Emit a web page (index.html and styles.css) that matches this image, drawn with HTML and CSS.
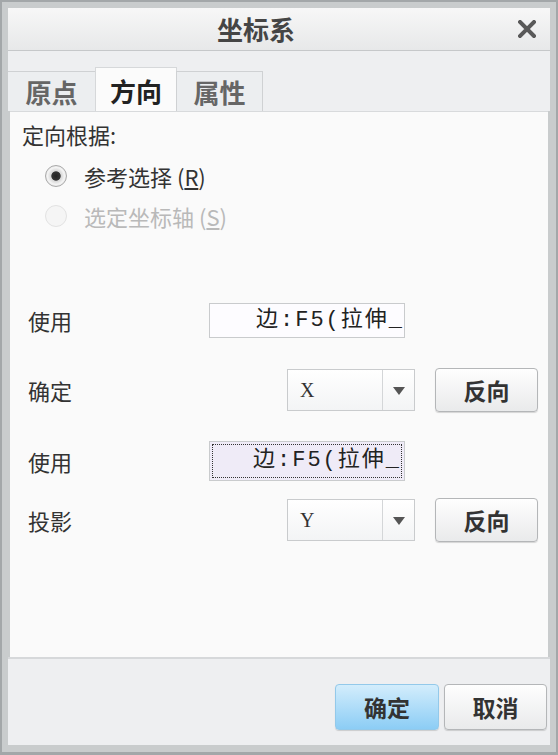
FILE: index.html
```html
<!DOCTYPE html>
<html lang="zh-CN">

<head>
    <meta charset="UTF-8">
    <meta name="viewport" content="width=device-width, initial-scale=1.0">
    <title>坐标系</title>
    <link rel="stylesheet" href="styles.css">
</head>

<body>
    <div class="window">
        <div class="titlebar">
            <h4>坐标系</h4>
            <span class="close">
                <svg width="18" height="18" viewBox="0 0 18 18">
                    <path d="M2 2 L16 16 M16 2 L2 16" stroke="#595959" stroke-width="4" stroke-linecap="square" />
                </svg>
            </span>
        </div>
        <div class="tabs">
            <div class="tab first">原点</div>
            <div class="tab active">方向</div>
            <div class="tab">属性</div>
        </div>
        <div class="panel">
            <p class="caption">定向根据:</p>
            <ul class="radios">
                <li><span class="radio checked"></span>参考选择 (<u>R</u>)</li>
                <li class="disabled"><span class="radio"></span>选定坐标轴 (<u>S</u>)</li>
            </ul>
            <div class="form">
                <div class="row row-use">
                    <label>使用</label>
                    <div class="field">边:F5(拉伸_</div>
                </div>
                <div class="row row-dir">
                    <label>确定</label>
                    <div class="select"><span class="value">X</span><span class="arrow"></span></div>
                    <button class="btn">反向</button>
                </div>
                <div class="row row-use2">
                    <label>使用</label>
                    <div class="field focus"><span>边:F5(拉伸_</span></div>
                </div>
                <div class="row row-proj">
                    <label>投影</label>
                    <div class="select"><span class="value">Y</span><span class="arrow"></span></div>
                    <button class="btn">反向</button>
                </div>
            </div>
        </div>
        <div class="footer">
            <button class="btn primary">确定</button>
            <button class="btn">取消</button>
        </div>
    </div>
</body>

</html>
```

FILE: styles.css
```css
* {
    padding: 0;
    margin: 0;
    box-sizing: border-box;
}

body {
    font-family: "Noto Sans CJK SC", "DejaVu Sans", sans-serif;
    color: #333;
    background-color: #c9cccd;
}

.window {
    width: 558px;
    height: 755px;
    border: 2px solid #a3a7a9;
    border-bottom-width: 3px;
    padding: 6px 6px 7px 6px;
    background-color: #c9cccd;
    display: flex;
    flex-direction: column;
}

.titlebar {
    position: relative;
    height: 43px;
    background: linear-gradient(#f7f7f7, #e7e8e9);
    border-bottom: 1px solid #c6c8ca;
    text-align: center;
    padding-right: 46px;
}

.titlebar h4 {
    line-height: 42px;
    font-size: 26px;
    font-weight: 700;
    color: #454545;
}

.close {
    position: absolute;
    right: 14px;
    top: 12px;
    width: 18px;
    height: 18px;
}

.close svg {
    display: block;
}

.tabs {
    height: 60px;
    background-color: #eeeff1;
    display: flex;
    align-items: flex-end;
}

.tab {
    height: 40px;
    width: 87px;
    border: 1px solid #cfd1d3;
    border-bottom: none;
    background-color: #eceef0;
    font-size: 26px;
    font-weight: 700;
    color: #666;
    line-height: 40px;
    text-align: center;
}

.tab.first {
    width: 88px;
    border-left: none;
}

.tab.active {
    height: 44px;
    width: 82px;
    line-height: 46px;
    background-color: #fbfbfb;
    color: #222;
    border-color: #d6d8da;
}

.tab + .tab {
    margin-left: -1px;
}

.panel {
    flex: 1;
    background-color: #fafafa;
    margin: 0 2px;
    border-top: 1px solid #d8dadc;
    padding: 6px 0 0 12px;
}

.caption {
    font-size: 22px;
    line-height: 32px;
    color: #333;
}

.radios {
    list-style: none;
    padding-left: 23px;
    margin-top: 6px;
}

.radios li {
    display: flex;
    align-items: center;
    height: 40px;
    font-size: 22px;
    color: #333;
}

.radios u {
    text-underline-offset: 2px;
}

.radios li.disabled {
    color: #b9b9b9;
}

.radio {
    width: 22px;
    height: 22px;
    border-radius: 50%;
    border: 1px solid #d8d8d8;
    background: radial-gradient(#ffffff 40%, #ececec);
    margin-right: 17px;
    position: relative;
}

.radio.checked {
    border-color: #a9a9a9;
    background: radial-gradient(#222 0, #333 30%, #d6d6d6 36%, #f4f4f4 60%, #cfcfcf 100%);
}

.disabled .radio {
    border-color: #e2e2e2;
    background: #f5f5f5;
}

.form {
    margin-top: 66px;
    padding-left: 6px;
}

.row {
    display: flex;
    align-items: center;
}

.row label {
    font-size: 22px;
    color: #333;
    width: 181px;
}

.row-dir label,
.row-proj label {
    width: 259px;
}

.row-use {
    height: 36px;
}

.row-dir {
    height: 44px;
    margin-top: 30px;
}

.row-use2 {
    height: 42px;
    margin-top: 28px;
}

.row-proj {
    height: 44px;
    margin-top: 16px;
}

.field {
    width: 196px;
    height: 35px;
    border: 1px solid #c9cbcd;
    background-color: #fdfcff;
    font-family: "Liberation Mono", "Noto Sans CJK SC", monospace;
    font-size: 22px;
    letter-spacing: 2px;
    text-align: right;
    line-height: 33px;
    padding-right: 0;
    color: #222;
    white-space: nowrap;
    overflow: hidden;
}

.field.focus {
    height: 40px;
    padding: 2px;
    background-color: #efebf7;
}

.field.focus span {
    display: block;
    height: 100%;
    border: 1px dotted #333;
    line-height: 32px;
}

.select {
    width: 128px;
    height: 42px;
    border: 1px solid #c9cbcd;
    background: linear-gradient(#ffffff, #f3f4f5);
    display: flex;
}

.select .value {
    flex: 1;
    font-family: "Liberation Serif", serif;
    font-size: 20px;
    line-height: 40px;
    padding-left: 12px;
    color: #333;
    border-right: 1px solid #d4d6d8;
}

.select .arrow {
    width: 31px;
    position: relative;
}

.select .arrow::after {
    content: "";
    position: absolute;
    left: 10px;
    top: 17px;
    border-left: 6px solid transparent;
    border-right: 6px solid transparent;
    border-top: 8px solid #555;
}

.btn {
    width: 103px;
    height: 44px;
    margin-left: 20px;
    border: 1px solid #b4b6b8;
    border-radius: 4px;
    background: linear-gradient(#fefefe, #e9eaeb);
    box-shadow: 0 1px 1px rgba(0, 0, 0, .15);
    font-family: "Noto Sans CJK SC", sans-serif;
    font-size: 23px;
    font-weight: 700;
    color: #333;
}

.footer {
    height: 88px;
    background-color: #eeeff1;
    border-top: 2px solid #d6d8da;
    display: flex;
    justify-content: flex-end;
    align-items: flex-start;
    padding: 25px 3px 0 0;
}

.footer .btn {
    height: 46px;
    margin-left: 5px;
}

.footer .btn.primary {
    width: 104px;
    border-color: #93c9ea;
    background: linear-gradient(#d3edfc, #8ccdf5);
}
```
